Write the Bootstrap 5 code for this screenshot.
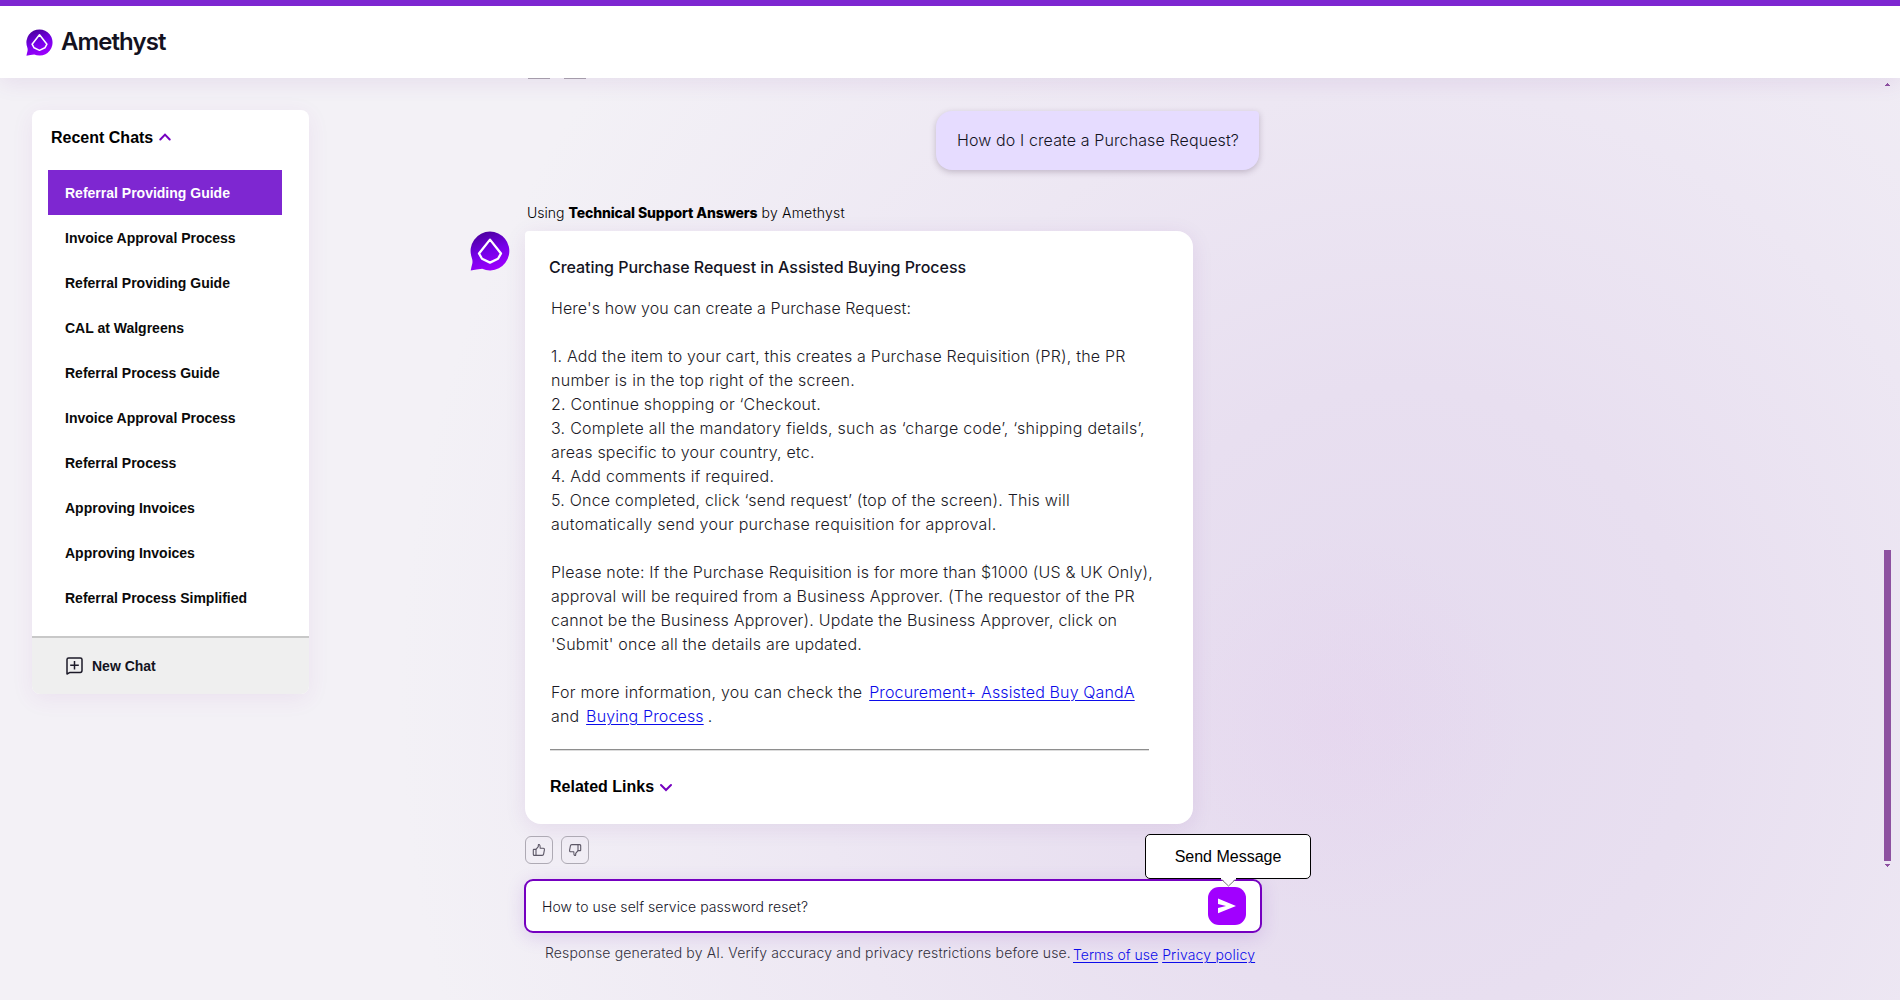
<!DOCTYPE html>
<html lang="en">
<head>
<meta charset="utf-8">
<meta name="viewport" content="width=device-width, initial-scale=1">
<title>Amethyst</title>
<link href="https://cdn.jsdelivr.net/npm/bootstrap@5.3.0/dist/css/bootstrap.min.css" rel="stylesheet">
<style>
:root { --violet: #7e27d1; --deep: #7500c0; --ui: "Liberation Sans", Arial, sans-serif; --copy: Inter, "Liberation Sans", sans-serif; }
body {
  height: 1000px; overflow: hidden; font-family: var(--copy); color: #14141f;
  background:
    radial-gradient(ellipse 190px 190px at 1335px 725px, rgba(231,210,238,.42), rgba(231,210,238,0)),
    radial-gradient(ellipse 1000px 1050px at 1400px 700px, #e5dbef 0%, #e8dff0 30%, rgba(237,231,243,.9) 62%, rgba(243,240,246,0) 100%),
    #f3f1f6;
}
.topbar { height: 78px; border-top: 6px solid var(--violet); padding: 0 0 0 26px; box-shadow: 0 4px 22px rgba(100,20,130,.09); z-index: 3; }
.brand { font-size: 24px; font-weight: 600; letter-spacing: -.92px; line-height: 30px; color: #14121f; margin-left: 8px; }
.stage { height: 922px; }
.rail { width: 277px; margin: 32px 0 0 32px; border-radius: 8px; box-shadow: 0 5px 22px rgba(150,50,170,.08); font-family: var(--ui); font-weight: 700; color: #000; background: #fff; }
.rail-head { font-size: 16px; line-height: 20px; padding: 18px 0 0 19px; height: 60px; gap: 6px; }
.rail-head svg { margin-top: -1px; }
.rail-list { padding: 0 27px 16px 16px; }
.rail-list .list-group-item { height: 45px; border: 0; border-radius: 0; padding: 0 0 0 17px; font-size: 14px; line-height: 46px; color: #0a0a0a; background: none; }
.rail-list .list-group-item.active { background: var(--violet); color: #fff; }
.rail-foot { height: 58px; background: #efefef; border-top: 2px solid #c8c8c8; border-radius: 0 0 8px 8px; font-size: 14px; padding-left: 34px; gap: 9px; color: #14141f; }
.talk { width: 842px; margin-left: 161px; position: relative; }
.peek { height: 1px; padding-left: 58px; gap: 14px; }
.peek i { width: 22px; height: 1px; background: #aaa4ae; }
.ask { margin: 32px 53px 0 0; width: 323px; height: 59px; background: #e6dcff; border-radius: 16px 4px 16px 16px; box-shadow: 0 2px 6px rgba(60,40,70,.26); font-size: 16px; font-weight: 300; letter-spacing: .115px; padding-left: 21px; line-height: 59px; }
.source { margin: 31px 0 0 57px; height: 30px; font-size: 14px; line-height: 24px; color: #000; font-weight: 300; white-space: pre; }
.source b { font-weight: 800; letter-spacing: -.11px; }
.source span { letter-spacing: .2px; }
.bot { width: 40px; margin: 0 15px 0 0; }
.reply { width: 668px; height: 593px; border-radius: 4px 16px 16px 16px; background: #fff; box-shadow: 0 4px 22px rgba(100,20,130,.09); padding: 24px 0 0 24px; }
.reply h1 { font-size: 16px; font-weight: 500; line-height: 24px; letter-spacing: -.04px; margin: 0; }
.answer { margin: 17px 0 0 2px; font-size: 16px; font-weight: 300; line-height: 24px; white-space: pre; color: #1b1a26; letter-spacing: .19px; }
.l0 { letter-spacing: .074px; } .l3 { letter-spacing: .265px; } .lf { letter-spacing: .21px; } .ln { letter-spacing: .27px; }
.answer a, .legal a { color: #0c0cea; text-decoration: underline; text-decoration-thickness: 1px; text-underline-offset: 2px; }
.answer a { letter-spacing: .13px; margin-left: 2px; }
.reply hr { width: 599px; margin: 21px 0 0 1px; border: 0; height: 2px; opacity: 1; background: linear-gradient(#8e8e8e 50%, #dcdcdc 50%); }
.related { font: 700 16px/20px var(--ui); color: #000; margin: 26px 0 0 1px; gap: 5px; }
.votes { margin: 12px 0 0 55px; gap: 8px; }
.vote { width: 28px; height: 28px; border: 1px solid #aeaab4; border-radius: 6px; background: none; padding: 0; }
.composer { margin: 15px 0 0 54px; width: 738px; height: 54px; border: 2px solid var(--deep); border-radius: 9px; background: #fff; box-shadow: 0 4px 18px rgba(117,40,192,.17); padding: 0 14px 0 16px; position: relative; }
.draft { font-size: 14px; font-weight: 300; letter-spacing: .07px; color: #14141f; }
.send { width: 38px; height: 38px; border: 0; border-radius: 11px; background: #a100ff; padding: 0; }
.tipbox { position: absolute; right: -51px; top: -47px; width: 166px; height: 45px; border: 1px solid #000; border-radius: 5px; background: #fff; font: 400 16px/43px var(--ui); color: #000; text-align: center; }
.tipbox svg { position: absolute; left: 75px; top: 43px; }
.legal { margin: 10px 0 0 75px; font-size: 14px; line-height: 20px; font-weight: 300; color: #33303c; white-space: nowrap; }
.legal p { margin: 0; letter-spacing: .154px; width: 528px; }
.legal a { margin-top: 2px; }
.legal .pol { letter-spacing: .18px; }
.track { width: 7px; margin: 5px 9px 0 auto; }
.thumb { width: 7px; height: 311px; background: #8d51a0; margin: 464px 0 3px; }
.track svg { display: block; margin-left: 1px; }
</style>
</head>
<body>
<svg width="0" height="0" class="position-absolute">
  <defs>
    <linearGradient id="gem" x1=".3" y1="0" x2=".65" y2="1"><stop offset="0" stop-color="#4a009c"/><stop offset=".5" stop-color="#7500e8"/><stop offset="1" stop-color="#a000ff"/></linearGradient>
    <symbol id="logo" viewBox="0 0 40 40">
      <path d="M20 .6A19.4 19.4 0 1 1 12.2 37.8Q6.5 38.2 .7 39.6 1.2 36.5 2.2 33 3 30 1.6 26.2A19.4 19.4 0 0 1 20 .6Z" fill="url(#gem)"/>
      <path d="M20 8.6 31 22.5 28 27.8 20 31.6 12 27.8 9 22.5Z" fill="none" stroke="#fff" stroke-width="2.3" stroke-linejoin="round"/>
    </symbol>
    <symbol id="like" viewBox="0 0 14 14"><g fill="none" stroke="#5c5766" stroke-width="1.1" stroke-linejoin="round"><path d="M1.6 6.4H4V12.4H2.4Q1.3 12.4 1.3 11V6.8Z"/><path d="M4 6.4 6.3 3.6V2.2Q6.4 1.2 7.3 1.5 8.3 2 8.2 5.2H11.2Q12.6 5.3 12.4 6.8L11.6 11.2Q11.4 12.4 10.2 12.4H4"/></g></symbol>
  </defs>
</svg>

<nav class="topbar bg-white d-flex align-items-center position-relative">
  <svg width="27" height="27"><use href="#logo"/></svg>
  <span class="brand">Amethyst</span>
</nav>

<main class="stage d-flex align-items-start">
  <aside class="rail flex-shrink-0">
    <div class="rail-head d-flex"><span>Recent Chats</span>
      <svg width="12" height="20" viewBox="0 0 12 20"><path d="M1.3 12.5 6 7.6 10.7 12.5" fill="none" stroke="#7500c0" stroke-width="2" stroke-linecap="round"/></svg>
    </div>
    <div class="rail-list list-group">
      <a class="list-group-item active">Referral Providing Guide</a>
      <a class="list-group-item">Invoice Approval Process</a>
      <a class="list-group-item">Referral Providing Guide</a>
      <a class="list-group-item">CAL at Walgreens</a>
      <a class="list-group-item">Referral Process Guide</a>
      <a class="list-group-item">Invoice Approval Process</a>
      <a class="list-group-item">Referral Process</a>
      <a class="list-group-item">Approving Invoices</a>
      <a class="list-group-item">Approving Invoices</a>
      <a class="list-group-item">Referral Process Simplified</a>
    </div>
    <div class="rail-foot d-flex align-items-center">
      <svg width="17" height="18" viewBox="0 0 17 18" fill="none" stroke="#1c1a28" stroke-width="1.5" stroke-linejoin="round"><path d="M1 17V2.6Q1 .9 2.7 .9H14.3Q16 .9 16 2.6V13.6Q16 15.4 14.3 15.4H4Z"/><path d="M8.5 4V12.6M4.2 8.3H12.8"/></svg>
      <span>New Chat</span>
    </div>
  </aside>

  <section class="talk flex-shrink-0">
    <div class="peek d-flex"><i></i><i></i></div>
    <div class="ask ms-auto">How do I create a Purchase Request?</div>
    <div class="source">Using <b>Technical Support Answers</b><span> by Amethyst</span></div>
    <div class="d-flex align-items-start">
      <svg class="bot flex-shrink-0" width="40" height="40"><use href="#logo"/></svg>
      <article class="reply">
        <h1>Creating Purchase Request in Assisted Buying Process</h1>
        <div class="answer"><span class="l0">Here's how you can create a Purchase Request:</span>

1. Add the item to your cart, this creates a Purchase Requisition (PR), the PR
<span class="ln">number is in the top right of the screen.</span>
2. Continue shopping or ‘Checkout.
<span class="l3">3. Complete all the mandatory fields, such as ‘charge code’, ‘shipping details’,</span>
areas specific to your country, etc.
<span class="ln">4. Add comments if required.</span>
<span class="lf">5. Once completed, click ‘send request’ (top of the screen). This will</span>
<span class="ln">automatically send your purchase requisition for approval.</span>

Please note: If the Purchase Requisition is for more than $1000 (US &amp; UK Only),
approval will be required from a Business Approver. (The requestor of the PR
cannot be the Business Approver). Update the Business Approver, click on
<span class="lf">'Submit' once all the details are updated.</span>

<span class="ln">For more information, you can check the </span><a href="#">Procurement+ Assisted Buy QandA</a>
and <a href="#" class="me-1">Buying Process</a>.</div>
        <hr>
        <div class="related d-flex"><span>Related Links</span>
          <svg width="14" height="20" viewBox="0 0 14 20"><path d="M2 8 7 13 12 8" fill="none" stroke="#7500c0" stroke-width="2" stroke-linecap="round"/></svg>
        </div>
      </article>
    </div>
    <div class="votes d-flex">
      <button class="vote d-flex align-items-center justify-content-center" aria-label="Like"><svg width="14" height="14"><use href="#like"/></svg></button>
      <button class="vote d-flex align-items-center justify-content-center" aria-label="Dislike"><svg width="14" height="14" viewBox="0 0 14 14"><use href="#like" width="14" height="14" transform="rotate(180 7 7)"/></svg></button>
    </div>
    <div class="composer d-flex align-items-center justify-content-between">
      <span class="draft">How to use self service password reset?</span>
      <button class="send d-flex align-items-center justify-content-center" aria-label="Send"><svg width="18" height="16" viewBox="0 0 18 16"><path d="M0 .4 18 8 0 15.2V10L8 8 0 6Z" fill="#fff"/></svg></button>
      <div class="tipbox">Send Message<svg width="15" height="9" viewBox="0 0 15 9"><path d="M0 0 7.5 8 15 0Z" fill="#fff"/><path d="M.5 1.4 7.5 8 14.5 1.4" fill="none" stroke="#777"/><path d="M0 0H15V1.6H0Z" fill="#fff"/></svg></div>
    </div>
    <div class="legal d-flex">
      <p>Response generated by AI. Verify accuracy and privacy restrictions before use.</p>
      <a href="#">Terms of use</a><a href="#" class="pol ms-1">Privacy policy</a>
    </div>
  </section>

  <div class="track">
    <svg width="5" height="3"><path d="M2 0H3V1H4V2H5V3H0V2H1V1H2Z" fill="#8d51a0"/></svg>
    <div class="thumb"></div>
    <svg width="5" height="3"><path d="M0 0H5V1H4V2H3V3H2V2H1V1H0Z" fill="#8d51a0"/></svg>
  </div>
</main>
<script src="https://cdn.jsdelivr.net/npm/bootstrap@5.3.0/dist/js/bootstrap.bundle.min.js"></script>
</body>
</html>
